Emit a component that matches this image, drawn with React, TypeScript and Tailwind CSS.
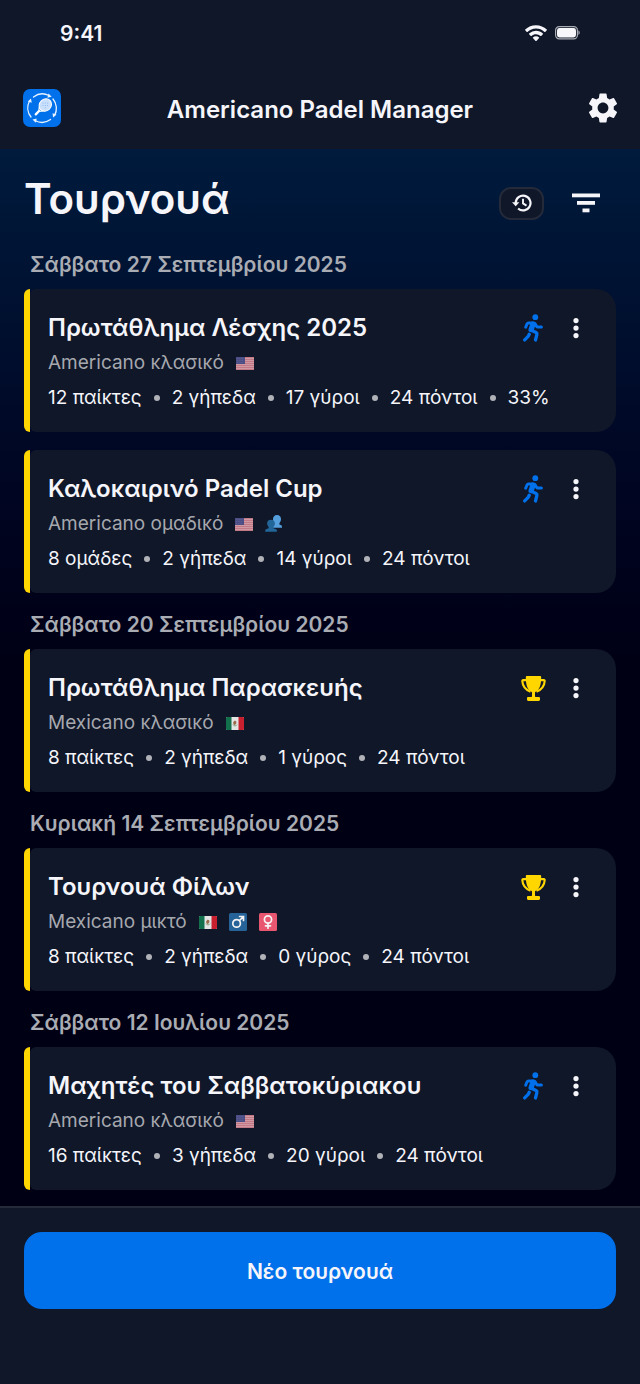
import { FaEllipsisVertical } from "react-icons/fa6";
import { MdSettings } from "react-icons/md";

type Badge = "us" | "mx" | "team" | "male" | "female";

type Tournament = {
  name: string;
  mode: string;
  badges: Badge[];
  stats: string[];
  finished?: boolean;
};

const days: { date: string; items: Tournament[] }[] = [
  {
    date: "Σάββατο 27 Σεπτεμβρίου 2025",
    items: [
      {
        name: "Πρωτάθλημα Λέσχης 2025",
        mode: "Americano κλασικό",
        badges: ["us"],
        stats: ["12 παίκτες", "2 γήπεδα", "17 γύροι", "24 πόντοι", "33%"],
      },
      {
        name: "Καλοκαιρινό Padel Cup",
        mode: "Americano ομαδικό",
        badges: ["us", "team"],
        stats: ["8 ομάδες", "2 γήπεδα", "14 γύροι", "24 πόντοι"],
      },
    ],
  },
  {
    date: "Σάββατο 20 Σεπτεμβρίου 2025",
    items: [
      {
        name: "Πρωτάθλημα Παρασκευής",
        mode: "Mexicano κλασικό",
        badges: ["mx"],
        stats: ["8 παίκτες", "2 γήπεδα", "1 γύρος", "24 πόντοι"],
        finished: true,
      },
    ],
  },
  {
    date: "Κυριακή 14 Σεπτεμβρίου 2025",
    items: [
      {
        name: "Τουρνουά Φίλων",
        mode: "Mexicano μικτό",
        badges: ["mx", "male", "female"],
        stats: ["8 παίκτες", "2 γήπεδα", "0 γύρος", "24 πόντοι"],
        finished: true,
      },
    ],
  },
  {
    date: "Σάββατο 12 Ιουλίου 2025",
    items: [
      {
        name: "Μαχητές του Σαββατοκύριακου",
        mode: "Americano κλασικό",
        badges: ["us"],
        stats: ["16 παίκτες", "3 γήπεδα", "20 γύροι", "24 πόντοι"],
      },
    ],
  },
];

function Logo() {
  return (
    <svg className="size-[38px]" viewBox="0 0 38 38" fill="none">
      <rect width="38" height="38" rx="7" fill="#0070eb" />
      <g stroke="#e8f3ff" strokeWidth="1.3" strokeLinecap="round">
        <path d="M10.500 8A14.500 14.500 0 0 1 26 6.500" />
        <path d="M30 10A14.500 14.500 0 0 1 31.500 26.500" />
        <path d="M27.500 30.500A14.500 14.500 0 0 1 12 31.500" />
        <path d="M8 28A14.500 14.500 0 0 1 6.500 12" />
      </g>
      <g fill="#e8f3ff">
        <path d="M25.500 4.500l3.200 3.300-4.300.9z" />
        <path d="M33.500 25.500l-3.400 3-.6-4.200z" />
        <path d="M12.800 33.800l-3.300-3.200 4.200-1z" />
        <path d="M4.800 12.600l3.200-3 .8 4.100z" />
      </g>
      <ellipse cx="22.300" cy="16" rx="6.600" ry="5.800" transform="rotate(-45 22.300 16)" fill="#c9dffb" stroke="#fff" strokeWidth="1" />
      <path d="M16.400 17.500l-.6 4 .7.9 4-.5" stroke="#fff" strokeWidth="1.200" />
      <path d="M16 22l-3.200 3.300" stroke="#fff" strokeWidth="2.400" strokeLinecap="round" />
      <g fill="#7fb2f2">
        <circle cx="20" cy="14" r=".5" />
        <circle cx="22.300" cy="14" r=".5" />
        <circle cx="24.600" cy="14" r=".5" />
        <circle cx="20" cy="16.400" r=".5" />
        <circle cx="22.300" cy="16.400" r=".5" />
        <circle cx="24.600" cy="16.400" r=".5" />
        <circle cx="22.300" cy="18.800" r=".5" />
      </g>
    </svg>
  );
}

function WifiIcon() {
  return (
    <svg className="h-[17px] w-[22px]" viewBox="0 0 22 17" fill="#f5f5fa">
      <path d="M11 .2c4.200 0 8 1.600 10.800 4.300.2.200.2.500 0 .8l-1.600 1.600c-.2.200-.5.200-.7 0A12.300 12.300 0 0 0 11 3.500c-3.200 0-6.200 1.300-8.500 3.400-.2.200-.5.200-.7 0L.2 5.300c-.2-.3-.2-.6 0-.8A15.600 15.600 0 0 1 11 .2z" />
      <path d="M11 5.800c2.600 0 5 1 6.900 2.700.2.200.2.500 0 .7l-1.700 1.700c-.2.200-.5.200-.7 0A6.700 6.700 0 0 0 11 9.200c-1.700 0-3.300.6-4.500 1.700-.2.200-.5.200-.7 0L4.100 9.200c-.2-.2-.2-.5 0-.7A10.200 10.200 0 0 1 11 5.800z" />
      <path d="M11 11.300c1.200 0 2.200.4 3.100 1.100.2.200.2.500 0 .7l-2.700 2.800c-.2.200-.6.200-.8 0l-2.700-2.800c-.2-.2-.2-.5 0-.7.900-.7 1.900-1.100 3.100-1.100z" />
    </svg>
  );
}

function BatteryIcon() {
  return (
    <svg className="h-[14px] w-[25px]" viewBox="0 0 25 14" fill="none">
      <rect x=".6" y=".6" width="21.800" height="12.200" rx="3.600" stroke="#a9abb3" strokeWidth="1.200" />
      <rect x="2" y="2" width="19" height="9.400" rx="2.400" fill="#f5f5fa" />
      <path d="M23.400 4.600c.9.400 1.300 1.200 1.300 2.100s-.4 1.700-1.300 2.100z" fill="#a9abb3" />
    </svg>
  );
}

function HistoryIcon() {
  return (
    <svg className="h-[18px] w-5" viewBox="0 0 20 18" fill="none" stroke="currentColor" strokeWidth="2.200">
      <path d="M3.700 9a7.400 7.400 0 1 1 2.400 5.500" />
      <path d="M11 4.700v4.700l3.500 2.200" strokeWidth="1.900" />
      <path d="M0 8.300h7.400l-3.700 4z" fill="currentColor" stroke="none" />
    </svg>
  );
}

function FilterIcon() {
  return (
    <svg className="h-[20px] w-[28px]" viewBox="0 0 28 20" fill="currentColor">
      <rect y=".5" width="28" height="3.800" />
      <rect x="5" y="8" width="18" height="3.800" />
      <rect x="10.500" y="15.500" width="7" height="3.800" />
    </svg>
  );
}

function RunnerIcon() {
  return (
    <svg className="h-[28px] w-[20px] text-[#0070eb]" viewBox="0 0 20 28" fill="none" stroke="currentColor" strokeLinecap="round" strokeLinejoin="round">
      <circle cx="12.300" cy="3.200" r="2.900" fill="currentColor" stroke="none" />
      <path d="M2.700 13.200l1.400-3.400c.3-.6.700-.9 1.400-.9h5c.9 0 1.500.4 1.900 1.200l1.100 2.200c.3.500.7.800 1.300.8h3.600" strokeWidth="3" />
      <path d="M10 10.200L8.200 15.500" strokeWidth="5.400" />
      <path d="M8.200 16.300l4.900 2.300c.8.400 1 .9.800 1.700l-1.400 5.700" strokeWidth="3.300" />
      <path d="M6.200 20.300l-.7 1.500c-.2.400-.3.600-.6.900l-3.200 3.200" strokeWidth="3.300" />
    </svg>
  );
}

function TrophyIcon() {
  return (
    <svg className="size-[25px] text-[#ffd600]" viewBox="0 0 25 25" fill="currentColor">
      <path d="M6 0h13c.7 0 1.200.5 1.200 1.200 0 7.400-1.400 12.600-5.800 14.700-.3.200-.4.400-.4.800v3.600c0 .4.200.6.600.7h3.100c.8 0 1.300.5 1.300 1.200v1.600c0 .7-.5 1.200-1.300 1.200H7.300c-.8 0-1.300-.5-1.300-1.200v-1.600c0-.7.5-1.200 1.300-1.200h3.100c.4-.1.600-.3.600-.7v-3.600c0-.4-.1-.6-.4-.8C6.200 13.800 4.800 8.600 4.800 1.200 4.800.5 5.300 0 6 0z" />
      <path d="M5.500 4.100H2.200c-.7 0-1 .4-.9 1 .3 5.200 3.300 8.600 8.200 10.600M19.500 4.100h3.300c.7 0 1 .4.900 1-.3 5.200-3.300 8.600-8.200 10.600" fill="none" stroke="currentColor" strokeWidth="2.100" />
    </svg>
  );
}

function BadgeIcon({ type }: { type: Badge }) {
  if (type === "us") {
    return (
      <svg className="h-[13px] w-[18px]" viewBox="0 0 18 13">
        <rect width="18" height="13" rx="1" fill="#d09aa4" />
        {[0, 2, 4, 6, 8, 10, 12].map((y) => (
          <rect key={y} y={y} width="18" height="1" fill="#c27985" />
        ))}
        <rect width="9" height="7" fill="#4b4d85" />
        {[1.5, 3.5, 5.5].map((y) => (
          <path key={y} d={`M1 ${y}h7`} stroke="#7072a0" strokeWidth=".6" strokeDasharray=".8 1" />
        ))}
      </svg>
    );
  }
  if (type === "mx") {
    return (
      <svg className="h-[13px] w-[18px]" viewBox="0 0 18 13">
        <rect width="18" height="13" rx="1" fill="#e4e4e4" />
        <path d="M1 0h4.500v13H1a1 1 0 0 1-1-1V1a1 1 0 0 1 1-1z" fill="#12704c" />
        <path d="M12.500 0H17a1 1 0 0 1 1 1v11a1 1 0 0 1-1 1h-4.500z" fill="#c8202f" />
        <path d="M7.200 5.200l1.600-1.700 1.700 1.300-.4 2.300-1.600.9-1.200-.8z" fill="#9a6a4a" />
        <path d="M6.900 7.600c.7 1.700 3.500 1.700 4.200 0" fill="none" stroke="#6f9a6a" strokeWidth=".8" />
      </svg>
    );
  }
  if (type === "team") {
    return (
      <svg className="size-[18px]" viewBox="0 0 18 18">
        <path d="M12 0c2.600 0 4 1.800 4 4.200 0 1.500-.6 2.900-1.600 3.700v1.600l1.800.7c.6.300.8 1 .8 2.500H8V4.200C8 1.700 9.500 0 12 0z" fill="#559fdd" />
        <path d="M6 4.700c2.500 0 3.900 1.700 3.900 3.900 0 1.400-.6 2.600-1.500 3.400v1.200l2.700 1c.6.300.8 1 .8 2.500H.2c0-1.500.2-2.200.8-2.500l2.600-1V12a4.500 4.500 0 0 1-1.500-3.400c0-2.200 1.400-3.900 3.900-3.900z" fill="#226699" />
      </svg>
    );
  }
  return (
    <svg className="size-[18px]" viewBox="0 0 18 18" fill="none" stroke="#f4f4f4" strokeWidth="1.700" strokeLinecap="round">
      <rect width="18" height="18" rx="1.500" fill={type === "male" ? "#256398" : "#e95670"} stroke="none" />
      {type === "male" ? (
        <>
          <circle cx="7.600" cy="10.400" r="3.800" />
          <path d="M10.500 7.500l3.900-3.900M10.600 3.500h3.900v3.900" />
        </>
      ) : (
        <>
          <circle cx="9" cy="6.500" r="3.600" />
          <path d="M9 10.200v5M6.500 12.800h5" />
        </>
      )}
    </svg>
  );
}

function TournamentCard({ item }: { item: Tournament }) {
  return (
    <article className="flex">
      <div className="w-[6px] rounded-l-md bg-[#ffd600]" />
      <div className="min-w-0 flex-1 rounded-l-md rounded-r-[20px] bg-[#0f1729] pt-6 pr-7 pb-[22px] pl-[18px]">
        <div className="flex h-[30px] items-center">
          <h3 className="flex-1 text-[24px] leading-[30px] font-semibold text-[#f5f5fa]">{item.name}</h3>
          <div className="mr-[18px] flex w-[26px] justify-center">{item.finished ? <TrophyIcon /> : <RunnerIcon />}</div>
          <button type="button" aria-label="Επιλογές" className="text-[#f5f5fa]">
            <FaEllipsisVertical className="size-6" />
          </button>
        </div>
        <div className="mt-2 flex items-center gap-3 leading-6">
          <span className="text-[19px] text-[#a6a8ae]">{item.mode}</span>
          {item.badges.map((badge) => (
            <BadgeIcon key={badge} type={badge} />
          ))}
        </div>
        <div className="mt-[11px] flex items-center gap-3 text-[19px] leading-6 text-[#f5f5fa]">
          {item.stats.map((stat, i) => (
            <span key={stat} className="flex items-center gap-3">
              {i > 0 && <span className="size-[6px] rounded-full bg-[#b0b2b8]" />}
              {stat}
            </span>
          ))}
        </div>
      </div>
    </article>
  );
}

export default function App() {
  return (
    <div className="flex min-h-screen flex-col bg-[#0f1729] font-['Inter',sans-serif]">
      {/* Status bar */}
      <div className="flex h-[66px] items-center justify-between px-[60px] text-[#f5f5fa]">
        <span className="pt-[2px] text-[21px] font-semibold">9:41</span>
        <div className="flex items-center gap-2">
          <WifiIcon />
          <BatteryIcon />
        </div>
      </div>

      {/* App bar */}
      <header className="grid h-[83px] grid-cols-[38px_1fr_38px] items-center px-[23px]">
        <Logo />
        <h1 className="pt-1 text-center text-[24px] font-semibold text-[#f5f5fa]">Americano Padel Manager</h1>
        <button type="button" aria-label="Ρυθμίσεις" className="justify-self-end text-[#f5f5fa]">
          <MdSettings className="-mr-1 size-9" />
        </button>
      </header>

      <main className="flex-1 bg-linear-to-b from-[#001b3d] to-[#000014] to-50% px-6 pb-4">
        <div className="flex h-[102px] items-center justify-between">
          <h2 className="pb-[2px] text-[42px] leading-[50px] font-semibold text-[#f5f5fa]">Τουρνουά</h2>
          <div className="flex items-center gap-7 pt-[6px] pr-4">
            <button
              type="button"
              aria-label="Ιστορικό"
              className="flex h-[33px] w-[45px] items-center justify-center rounded-xl border-2 border-[#242a3a] bg-[#0f1729] text-[#f5f5fa]"
            >
              <HistoryIcon />
            </button>
            <button type="button" aria-label="Φίλτρα" className="text-[#f5f5fa]">
              <FilterIcon />
            </button>
          </div>
        </div>

        <div className="flex flex-col gap-[18px]">
          {days.map((day) => (
            <section key={day.date}>
              <h2 className="mb-[10px] pl-[6px] text-[21px] leading-7 font-semibold text-[#a9acb3]">{day.date}</h2>
              <div className="flex flex-col gap-[18px]">
                {day.items.map((item) => (
                  <TournamentCard key={item.name} item={item} />
                ))}
              </div>
            </section>
          ))}
        </div>
      </main>

      <footer className="border-t-2 border-[#242a3a] px-6 pt-6 pb-[75px]">
        <button type="button" className="h-[77px] w-full rounded-[18px] bg-[#0070eb] pt-[3px] text-[21px] font-semibold text-[#f5f5fa]">
          Νέο τουρνουά
        </button>
      </footer>
    </div>
  );
}
